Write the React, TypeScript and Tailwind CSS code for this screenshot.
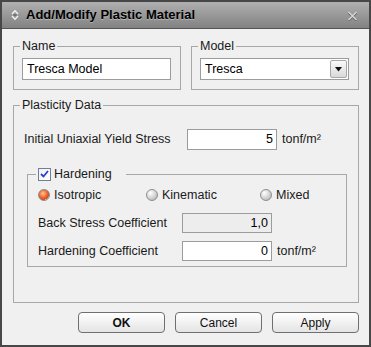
import React from "react";

const font = "font-['Liberation_Sans',Arial,sans-serif]";

function Radio({ checked, label, className }: { checked?: boolean; label: string; className?: string }) {
  return (
    <div className={"flex items-center gap-[4px] " + (className || "")}>
      <span
        className={
          "w-[12px] h-[12px] rounded-full border " +
          (checked
            ? "border-[#8a8a8a] bg-[radial-gradient(circle_at_40%_35%,#ffc2a0,#f06a2c_45%,#d8481a_70%,#c9c9c9_72%,#e6e6e6)]"
            : "border-[#8e8e8e] bg-[radial-gradient(circle_at_35%_30%,#ffffff,#d2d2d2_55%,#a8a8a8)]")
        }
      />
      <span>{label}</span>
    </div>
  );
}

function Btn({ label, bold }: { label: string; bold?: boolean }) {
  return (
    <button
      className={
        "w-[87px] h-[21px] rounded-[4px] border border-[#6f6f6f] bg-gradient-to-b from-white to-[#e4e4e4] text-[12px] text-[#111] flex items-center justify-center " +
        (bold ? "font-bold" : "")
      }
    >
      {label}
    </button>
  );
}

export default function App() {
  return (
    <div
      className={
        "w-[371px] h-[347px] border-2 border-[#474747] bg-[#f0f0f0] flex flex-col overflow-hidden text-[12.5px] text-[#1a1a1a] " +
        font
      }
    >
      {/* Title bar */}
      <div className="h-[27px] shrink-0 border-b border-[#555] bg-gradient-to-b from-[#b0b0b0] to-[#828282] flex items-center pl-[9px] pr-[11px]">
        <svg width="8" height="12" viewBox="0 0 8 12" className="mr-[7px]">
          <path d="M1 5 L4 1.8 L7 5" fill="none" stroke="#f2f2f2" strokeWidth="1.4" />
          <path d="M1 7 L4 10.2 L7 7" fill="none" stroke="#f2f2f2" strokeWidth="1.4" />
          <path d="M2.5 5.5 L5.5 5.5 M2.5 6.5 L5.5 6.5" stroke="#6a6a6a" strokeWidth="0.8" />
        </svg>
        <span className="text-[13px] font-bold text-black [text-shadow:0_1px_0_rgba(255,255,255,0.35)]">
          Add/Modify Plastic Material
        </span>
        <svg width="11" height="11" viewBox="0 0 11 11" className="ml-auto">
          <path d="M1.5 2 L9.5 10 M9.5 2 L1.5 10" stroke="#5e5e5e" strokeWidth="2" transform="translate(0 0.7)" />
          <path d="M1.5 2 L9.5 10 M9.5 2 L1.5 10" stroke="#d6d6d6" strokeWidth="1.6" />
        </svg>
      </div>

      {/* Body */}
      <div className="flex flex-col pt-[10px] pl-[11px] pr-[10px]">
        <div className="flex gap-[10px]">
          <fieldset className="w-[168px] border border-[#a7a7a7] pl-[8px] pr-[9px] pt-[5px] pb-[9px]">
            <legend className="-ml-[2px] px-[2px] leading-[14px]">Name</legend>
            <div className="h-[22px] border border-[#9c9c9c] bg-white flex items-center pl-[4px] text-black">
              Tresca Model
            </div>
          </fieldset>
          <fieldset className="w-[168px] border border-[#a7a7a7] pl-[8px] pr-[9px] pt-[5px] pb-[9px]">
            <legend className="-ml-[2px] px-[2px] leading-[14px]">Model</legend>
            <div className="h-[22px] border border-[#9c9c9c] bg-white flex items-center pl-[4px] pr-[1px] text-black">
              <span className="flex-1">Tresca</span>
              <span className="w-[17px] h-[18px] rounded-[2px] border border-[#a8a8a8] bg-gradient-to-b from-[#fafafa] to-[#d9d9d9] flex items-center justify-center">
                <svg width="7" height="5" viewBox="0 0 7 5">
                  <path d="M0 0 L7 0 L3.5 4.5 Z" fill="#111" />
                </svg>
              </span>
            </div>
          </fieldset>
        </div>

        <fieldset className="mt-[8px] border border-[#a7a7a7] pl-[10px] pt-[17px] pb-[35px]">
          <legend className="-ml-[4px] px-[2px] leading-[14px]">Plasticity Data</legend>
          <div className="h-[21px] flex items-center">
            <span className="w-[163px]">Initial Uniaxial Yield Stress</span>
            <div className="w-[90px] h-[21px] border border-[#9c9c9c] bg-white flex items-center justify-end pr-[3px] text-black">
              5
            </div>
            <span className="ml-[5px]">tonf/m²</span>
          </div>

          <fieldset className="mt-[17px] ml-[3px] w-[320px] border border-[#a7a7a7] pl-[10px] pt-[7px] pb-[5px]">
            <legend className="-ml-[2px] pl-[2px] pr-[14px] leading-[14px] flex items-center gap-[3px]">
              <span className="w-[13px] h-[13px] border border-[#6e7f96] bg-gradient-to-br from-[#eef1f6] to-white flex items-center justify-center">
                <svg width="9" height="8" viewBox="0 0 9 8">
                  <path d="M1 4 L3.5 6.5 L8 1" fill="none" stroke="#2e3fc4" strokeWidth="1.8" />
                </svg>
              </span>
              <span>Hardening</span>
            </legend>
            <div className="h-[14px] flex items-center">
              <Radio checked label="Isotropic" className="w-[108px]" />
              <Radio label="Kinematic" className="w-[114px]" />
              <Radio label="Mixed" />
            </div>
            <div className="mt-[11px] h-[20px] flex items-center">
              <span className="w-[144px]">Back Stress Coefficient</span>
              <div className="w-[90px] h-[20px] border border-[#9c9c9c] bg-[#ededed] flex items-center justify-end pr-[3px] text-black">
                1,0
              </div>
            </div>
            <div className="mt-[8px] h-[20px] flex items-center">
              <span className="w-[144px]">Hardening Coefficient</span>
              <div className="w-[90px] h-[20px] border border-[#9c9c9c] bg-white flex items-center justify-end pr-[3px] text-black">
                0
              </div>
              <span className="ml-[5px]">tonf/m²</span>
            </div>
          </fieldset>
        </fieldset>

        <div className="mt-[9px] flex justify-end gap-[10px]">
          <Btn label="OK" bold />
          <Btn label="Cancel" />
          <Btn label="Apply" />
        </div>
      </div>
    </div>
  );
}
